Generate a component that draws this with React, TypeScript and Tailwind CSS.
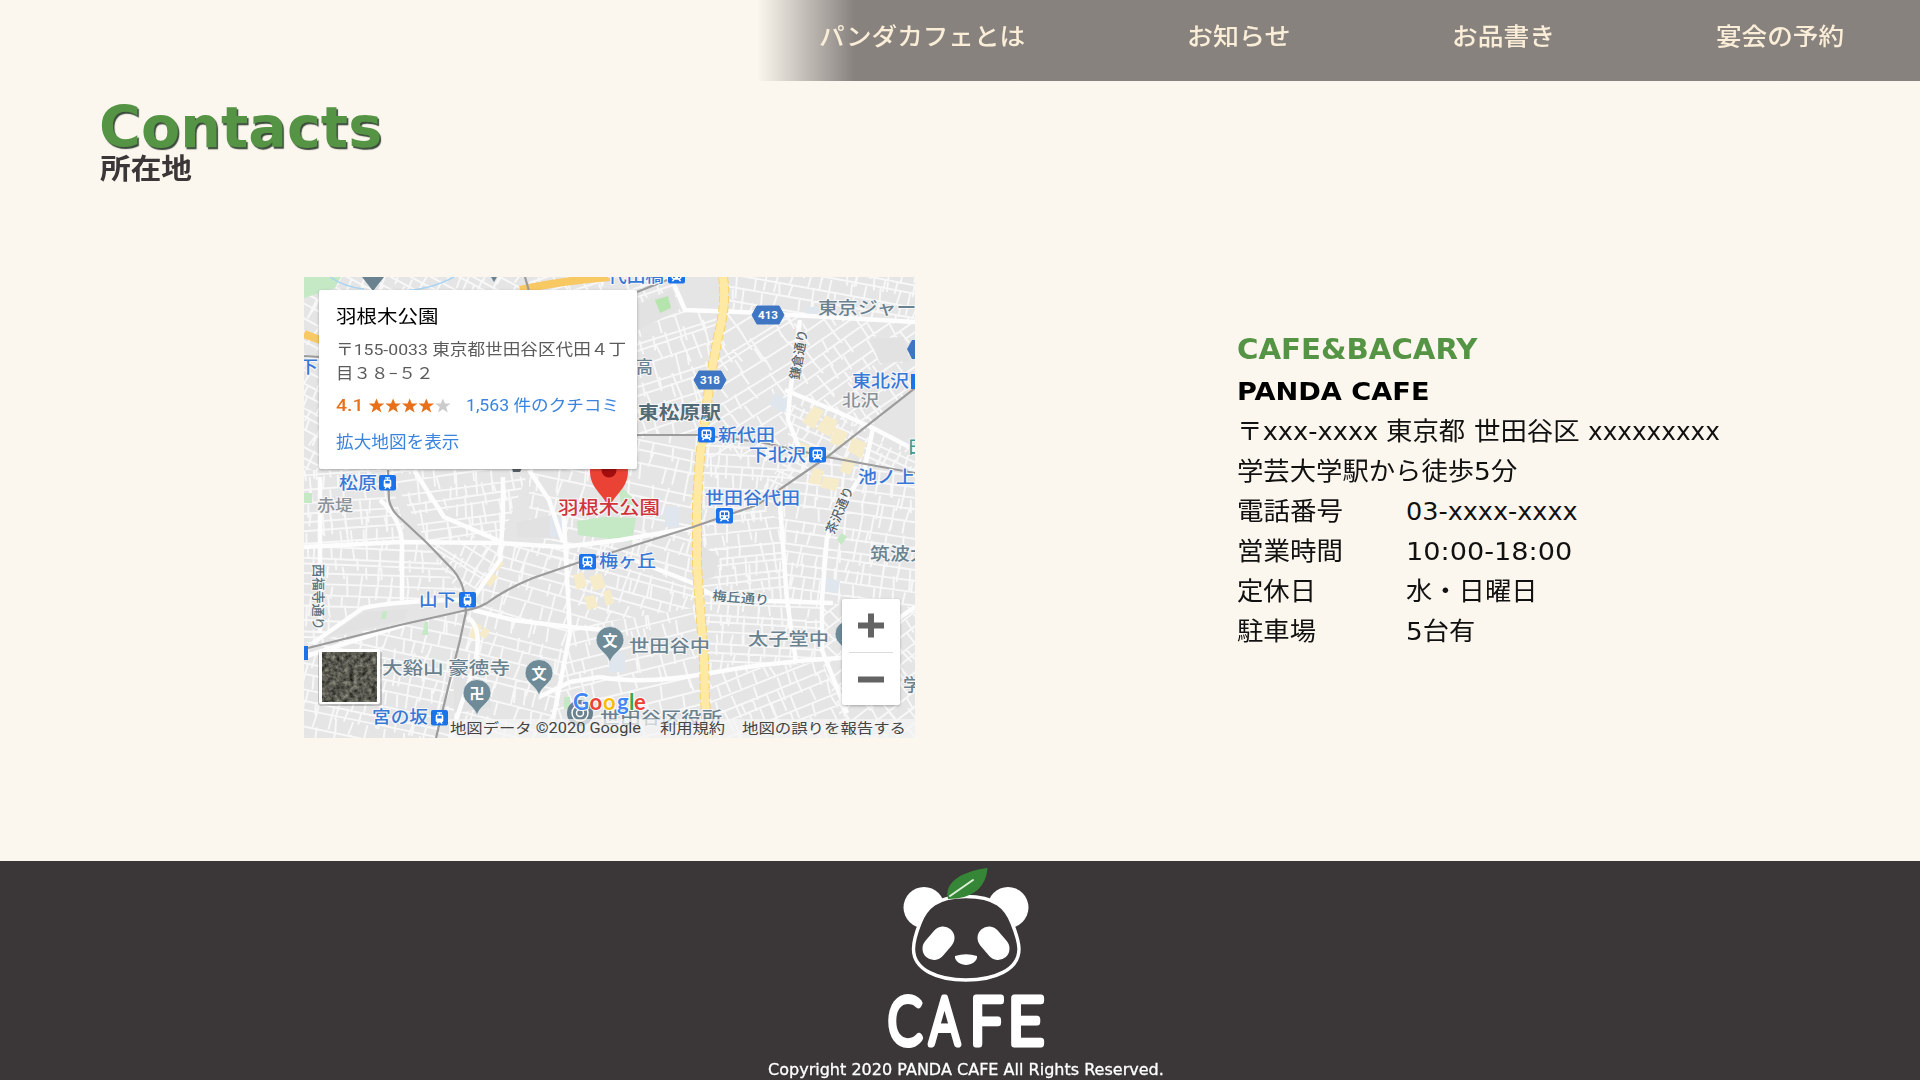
import { useLayoutEffect, useRef, type ReactNode } from "react";

const JP = "font-['Noto_Sans_CJK_JP',sans-serif]";
const LATIN = "font-['DejaVu_Sans','Noto_Sans_CJK_JP',sans-serif]";
const ROBOTO = "font-['Roboto','Noto_Sans_CJK_JP',sans-serif]";

/** One line of text, condensed or widened to an exact width. */
function Fit({ w, className = "", children }: { w: number; className?: string; children: ReactNode }) {
  const ref = useRef<HTMLSpanElement>(null);
  useLayoutEffect(() => {
    const el = ref.current;
    if (el) el.style.transform = `scaleX(${w / el.offsetWidth})`;
  }, [w]);
  return (
    <span className="block" style={{ width: w }}>
      <span ref={ref} className={`inline-block origin-left whitespace-pre ${className}`}>
        {children}
      </span>
    </span>
  );
}

function seeded(seed: number) {
  let s = seed;
  return () => {
    s = (s * 1664525 + 1013904223) % 4294967296;
    return s / 4294967296;
  };
}

/** Brick-like net of side streets around a centre, turned by an angle. */
function streets(seed: number, dx: number, dy: number, radius: number) {
  const rnd = seeded(seed);
  let d = "";
  for (let y = -radius; y < radius; y += dy * (0.7 + rnd() * 0.6)) {
    const bend = (rnd() - 0.5) * 10;
    d += `M${-radius} ${y.toFixed(1)}Q0 ${(y + bend).toFixed(1)} ${radius} ${(y + (rnd() - 0.5) * 8).toFixed(1)}`;
    for (let x = -radius; x < radius; x += dx * (0.6 + rnd() * 0.9)) {
      d += `M${x.toFixed(1)} ${y.toFixed(1)}l${((rnd() - 0.5) * 5).toFixed(1)} ${(dy * (rnd() > 0.7 ? 2 : 1.1)).toFixed(1)}`;
    }
  }
  return d;
}

const patches = [
  { p: "0,0 225,0 225,190 84,193 0,193", a: 28, dx: 16, dy: 11 },
  { p: "225,0 368,0 381,33 421,35 406,103 396,158 333,158 225,190", a: -18, dx: 18, dy: 13 },
  { p: "419,0 611,0 611,45 420,33", a: 10, dx: 16, dy: 11 },
  { p: "420,33 500,39 486,116 481,180 396,180 406,103", a: -32, dx: 22, dy: 14 },
  { p: "500,39 611,45 611,111 560,155 486,116", a: -35, dx: 20, dy: 14 },
  { p: "484,116 611,173 611,196 523,180 440,233 484,180", a: 24, dx: 13, dy: 10 },
  { p: "396,158 523,180 439,233 393,250", a: 3, dx: 17, dy: 11 },
  { p: "225,158 396,158 393,250 259,288 225,260", a: 12, dx: 20, dy: 14 },
  { p: "0,193 84,193 100,250 96,265 0,270", a: -4, dx: 15, dy: 12 },
  { p: "84,193 225,193 196,266 123,266", a: -8, dx: 17, dy: 11 },
  { p: "0,270 123,266 160,320 59,331 9,366 0,366", a: 2, dx: 20, dy: 11 },
  { p: "123,266 196,266 196,283 163,330", a: 32, dx: 13, dy: 9 },
  { p: "196,266 259,270 393,250 396,330 266,350 166,333", a: 16, dx: 16, dy: 12 },
  { p: "0,366 163,333 132,461 0,461", a: 12, dx: 16, dy: 12 },
  { p: "163,333 266,350 253,423 240,461 132,461", a: 14, dx: 15, dy: 13 },
  { p: "266,350 396,330 404,461 240,461", a: -14, dx: 20, dy: 14 },
  { p: "393,250 453,228 476,243 483,323 396,320", a: -6, dx: 14, dy: 10 },
  { p: "453,228 523,180 611,196 611,330 483,323 476,243", a: 8, dx: 15, dy: 12 },
  { p: "396,320 518,326 518,385 400,396", a: 3, dx: 14, dy: 10 },
  { p: "518,326 611,330 611,461 543,461 518,385", a: -38, dx: 18, dy: 13 },
  { p: "400,396 518,385 555,461 404,461", a: -22, dx: 17, dy: 12 },
];

const mainRoads = [
  "M368 3L381 33L436 35L611 45",
  "M481 113L529 133L569 151L611 173",
  "M496 43L486 116L484 143L496 173",
  "M523 260L518 323L518 373L543 436",
  "M296 400Q340 408 406 396T536 381L611 330",
  "M0 270L96 265L196 266L259 270L316 263L393 250",
  "M76 223Q96 240 98 265L98 323",
  "M9 366L59 331Q90 324 160 323",
  "M199 200L199 240L196 283L163 330",
  "M259 225L266 356L253 423L245 461",
  "M169 333L209 343L266 350L312 354",
  "M330 283L389 306Q410 322 429 323L529 326",
  "M476 228L483 323L492 385",
  "M16 200L16 356",
  "M0 380Q60 360 100 348",
  "M110 193L140 240L200 266",
  "M569 151L560 195L530 240L523 262",
  "M225 193L245 223L259 265",
  "M163 340Q180 350 170 390L146 461",
  "M296 400L266 405L235 420",
];

const rails = [
  "M333 158L396 158L456 165L523 180L611 196",
  "M611 111L523 180L453 228L389 250L306 276L273 286L229 301Q200 313 183 326Q172 332 163 333L96 348L4 371",
  "M84 193L85 223Q87 232 93 238L123 266L149 293Q157 302 160 315L162 335L156 363L146 403L138 436L132 461",
  "M221 0L225 14",
  "M333 15L363 3",
  "M0 79L16 80",
];

type LabelProps = { t: string; x: number; y: number; w: number; s?: number; c?: string; b?: boolean; rot?: number };
function Label({ t, x, y, w, s = 17, c = "#3a78d6", b, rot }: LabelProps) {
  return (
    <text
      x={x}
      y={y}
      textLength={w}
      lengthAdjust="spacingAndGlyphs"
      fontSize={s}
      fontWeight={b ? 700 : 500}
      fill={c}
      stroke="#f6f6f6"
      strokeWidth="2"
      paintOrder="stroke"
      transform={rot ? `rotate(${rot} ${x} ${y})` : undefined}
    >
      {t}
    </text>
  );
}

function Station({ x, y, tram }: { x: number; y: number; tram?: boolean }) {
  return (
    <g transform={`translate(${x} ${y})`}>
      <rect width="17" height="15.5" rx="2" fill="#1a73e8" />
      {tram ? (
        <g fill="#fff">
          <path d="M6 2.2h5v1.2H9v1h2.4l.9 1.4v5.4l-1.5 1.2 1 1.4h-1.6l-.9-1.2H7.700l-.9 1.200H5.200l1-1.400-1.500-1.200V5.800l.9-1.400H8v-1H6z" />
          <path d="M6.300 5.900h4.400v2.600H6.300z" fill="#1a73e8" />
        </g>
      ) : (
        <g fill="#fff">
          <path d="M5 2.500h7l1.500 1.500v6L12 11.300l1.300 2h-1.800l-1-1.500h-4l-1 1.500H3.700l1.300-2L3.500 10V4z" />
          <path d="M5 4.300h7v2.900H5z" fill="#1a73e8" />
          <circle cx="6" cy="9.300" r="1" fill="#1a73e8" />
          <circle cx="11" cy="9.300" r="1" fill="#1a73e8" />
          <path d="M8 4h1v3.400H8z" />
        </g>
      )}
    </g>
  );
}

function Pin({ x, y, t }: { x: number; y: number; t: string }) {
  return (
    <g transform={`translate(${x} ${y})`}>
      <path d="M0 22C-2 12-14 9-14-1A14 13.500 0 0 1 14-1C14 9 2 12 0 22Z" fill="#6f8b98" stroke="#e9eef0" strokeWidth=".8" />
      <text y="5" textAnchor="middle" fontSize="15" fontWeight="700" fill="#fff">
        {t}
      </text>
    </g>
  );
}

function RouteBadge({ x, y, t }: { x: number; y: number; t: string }) {
  return (
    <g transform={`translate(${x} ${y})`}>
      <path d="M-11-9H11L16 0L11 9H-11L-16 0Z" fill="#3f76c4" stroke="#3f76c4" strokeLinejoin="round" />
      <text y="4" textAnchor="middle" textLength="20" lengthAdjust="spacingAndGlyphs" fontSize="11" fontWeight="700" fill="#fff" fontFamily="Roboto, sans-serif">
        {t}
      </text>
    </g>
  );
}

function MapCanvas() {
  const slate = "#6a8290";
  return (
    <svg width="611" height="461" viewBox="0 0 611 461" className={`block ${JP}`}>
      <defs>
        {patches.map((k, i) => (
          <clipPath id={`patch${i}`} key={i}>
            <polygon points={k.p} />
          </clipPath>
        ))}
        <filter id="aerial" x="0" y="0" width="100%" height="100%" colorInterpolationFilters="sRGB">
          <feTurbulence type="fractalNoise" baseFrequency=".22" numOctaves="4" seed="4" />
          <feColorMatrix values=".6 .2 0 0 -.05  .6 .2 0 0 -.05  .55 .2 0 0 -.06  0 0 0 0 1" />
        </filter>
      </defs>
      <rect width="611" height="461" fill="#e5e5e6" />
      {patches.map((k, i) => {
        const pts = k.p.split(" ").map((q) => q.split(",").map(Number));
        const cx = pts.reduce((s, q) => s + q[0], 0) / pts.length;
        const cy = pts.reduce((s, q) => s + q[1], 0) / pts.length;
        return (
          <g key={i} clipPath={`url(#patch${i})`}>
            <path
              d={streets(i * 97 + 13, k.dx, k.dy, 190)}
              transform={`translate(${cx} ${cy}) rotate(${k.a})`}
              fill="none"
              stroke="#f8f8f9"
              strokeWidth="1.9"
            />
          </g>
        );
      })}
      <g fill="#e2e2e3">
        <path d="M333 28L368 12L376 32L333 54Z" />
        <path d="M212 245L250 238L257 262L214 260Z" />
        <path d="M20 360L62 335L104 332L100 343Z" />
        <path d="M150 400L180 404L188 430L150 436Z" />
        <path d="M566 62L600 60L606 84L576 86Z" />
        <path d="M397 268L416 280L410 300L397 304Z" />
      </g>
      <g fill="#dfe6ed">
        <path d="M246 240h12v20h-12zM361 230h14v20h-14zM470 116l16 8-6 12-14-8zM520 300l16 4-2 12-14-2zM502 30h22v10h-22zM305 375h16v20h-16z" />
      </g>
      <g fill="#f7ecc9">
        <path d="M498 145l12-16 10 5-10 18zM512 152l10-14 12 6-8 16zM494 165l14 4-4 10-12-4zM530 150l14 6-6 14-12-4zM548 160l14 6-4 16-14-8zM510 190l10 4-4 14-12-2zM520 200l16 2-4 12-16-4zM540 180l12 4-6 14-10-4z" />
        <path d="M188 290l6-8 6 4-6 8zM180 304l8-8 6 4-8 10zM269 298l10-3 4 14-10 4zM285 300l12-4 5 14-12 4zM280 320l10-2 4 12-10 3zM299 315l7-3 4 14-8 3zM170 345l8 4-6 14-7-3zM180 350l6 4-5 8-6-4z" />
      </g>
      <g fill="#c5e8c5">
        <path d="M0 0H37L31 11L0 21Z" />
        <path d="M273 244L300 240L332 241L328 265L274 258Z" />
        <path d="M313 205L334 227L318 230Z" />
        <path d="M351 23L364 19L367 31L356 36Z" fill="#b5e5ac" />
        <path d="M78 335l5-1-1 8h-5zM121 345h3v13h-6zM533 262l5-6 5 4-6 8zM0 216h8v10H0zM260 420h6v12h-6z" />
      </g>
      <path d="M100 14Q128 12 150 0M26 0Q40 10 60 12" fill="none" stroke="#a9d4f2" strokeWidth="1.5" />
      <g fill="none" stroke="#fdfdfd" strokeWidth="4.500" strokeLinejoin="round">
        {mainRoads.map((d) => (
          <path key={d} d={d} />
        ))}
      </g>
      <g fill="none">
        <path d="M216 13Q255 4 306 0M0 57L16 63" stroke="#f8c963" strokeWidth="8" />
        <path d="M419 0Q423 26 414 60L406 103L401 143L396 180L393 226V290L396 330L400 383L401 423L404 461" stroke="#f9d36e" strokeWidth="10" strokeDasharray="7 2.500" />
        <path d="M419 0Q423 26 414 60L406 103L401 143L396 180L393 226V290L396 330L400 383L401 423L404 461" stroke="#ffe9a3" strokeWidth="8" />
      </g>
      <g fill="none" stroke="#9c9c9c" strokeWidth="2.200">
        {rails.map((d) => (
          <path key={d} d={d} />
        ))}
      </g>

      <path d="M58 0H80L69 14Z" fill={slate} />
      <path d="M187 0h6l-3 5z" fill={slate} />
      <Label t="代田橋" x={304} y={5} w={56} />
      <Station x={364} y={-9} />
      <Label t="下高" x={-5} y={96} w={38} />
      <Label t="高" x={332} y={96} w={17} c={slate} />
      <RouteBadge x={464} y={38} t="413" />
      <RouteBadge x={406} y={103} t="318" />
      <path d="M603 72L608 63H611V82H608Z" fill="#3f76c4" />
      <Label t="東京ジャーナル" x={514} y={37} w={138} c={slate} />
      <Label t="鎌倉通り" x={495} y={103} w={50} s={13} c="#5a6469" rot={-80} />
      <Label t="東北沢" x={548} y={110} w={57} />
      <path d="M607 97h4v15h-4z" fill="#1a73e8" />
      <Label t="北沢" x={538} y={129} w={37} s={16} c="#8b9298" />
      <Label t="東松原駅" x={334} y={142} w={83} s={18} c="#536b77" b />
      <Station x={394} y={150} />
      <Label t="新代田" x={414} y={164} w={57} />
      <Label t="下北沢" x={445} y={184} w={57} />
      <Station x={505} y={170} />
      <Label t="池ノ上" x={554} y={206} w={57} />
      <Label t="日" x={603} y={176} w={18} c="#3c9d94" />
      <Label t="世田谷代田" x={401} y={227} w={95} />
      <Station x={412} y={231} />
      <Label t="茶沢通り" x={530} y={258} w={50} s={13} c="#5a6469" rot={-67} />
      <Label t="松原" x={35} y={212} w={38} />
      <Station x={75} y={198} tram />
      <Label t="赤堤" x={13} y={234} w={36} s={16} c="#8b9298" />
      <path d="M208 191h10l-2 4h-7z" fill="#5a6469" />
      <Label t="筑波大附" x={566} y={283} w={80} c={slate} />
      <Label t="梅ヶ丘" x={295} y={290} w={57} />
      <Station x={275} y={277} />
      <Label t="梅丘通り" x={408} y={323} w={57} s={13} c="#5a7280" rot={5} />
      <Label t="西福寺通り" x={10} y={287} w={66} s={13} c="#5a7280" rot={90} />
      <Label t="山下" x={115} y={329} w={37} />
      <Station x={155} y={315} tram />
      <path d="M-3 369h7v14h-7z" fill="#1a73e8" />
      <Label t="太子堂中" x={444} y={368} w={81} c={slate} />
      <Pin x={545} y={358} t="文" />
      <Label t="学" x={599} y={414} w={18} c={slate} />
      <Label t="世田谷中" x={325} y={375} w={81} c={slate} />
      <Pin x={306} y={364} t="文" />
      <Label t="大谿山 豪徳寺" x={78} y={397} w={128} c={slate} />
      <Pin x={235} y={397} t="文" />
      <Pin x={173} y={417} t="卍" />
      <Label t="宮の坂" x={68} y={446} w={56} />
      <Station x={127} y={433} tram />
      <circle cx="276" cy="436" r="13" fill={slate} />
      <circle cx="276" cy="436" r="8" fill="none" stroke="#fff" strokeWidth="1.500" />
      <circle cx="276" cy="436" r="3.500" fill="none" stroke="#fff" strokeWidth="1.500" />
      <Label t="世田谷区役所" x={296} y={447} w={122} c={slate} />

      <path d="M305 234C303 218 286 214 286 194A19 19 0 0 1 324 194C324 214 307 218 305 234Z" fill="#ea4335" />
      <circle cx="305" cy="193" r="7.500" fill="#a50e0e" />
      <Label t="羽根木公園" x={254} y={237} w={102} s={18} c="#d0343c" />

      <rect x="145" y="442" width="466" height="19" fill="#f5f5f5" fillOpacity=".72" />
      <text y="433" fontSize="22" fontWeight="700" fontFamily="Lato, sans-serif" stroke="#fff" strokeWidth="2" paintOrder="stroke">
        <tspan x="269" fill="#4285f4">G</tspan>
        <tspan x="285.500" fill="#ea4335">o</tspan>
        <tspan x="299" fill="#fbbc05">o</tspan>
        <tspan x="313" fill="#4285f4">g</tspan>
        <tspan x="325" fill="#34a853">l</tspan>
        <tspan x="330" fill="#ea4335">e</tspan>
      </text>
      <g fontSize="14" fill="#444" fontFamily="Roboto, 'Noto Sans CJK JP', sans-serif">
        <text x="146" y="456" textLength="191" lengthAdjust="spacingAndGlyphs">地図データ ©2020 Google</text>
        <text x="356" y="456" textLength="65" lengthAdjust="spacingAndGlyphs">利用規約</text>
        <text x="438" y="456" textLength="164" lengthAdjust="spacingAndGlyphs">地図の誤りを報告する</text>
      </g>

      <rect x="14" y="374" width="64" height="55" rx="3" fill="#000" opacity=".2" />
      <rect x="15" y="372" width="61" height="55" rx="2" fill="#fff" />
      <rect x="18" y="375" width="55" height="50" filter="url(#aerial)" />
    </svg>
  );
}

function PlaceCard() {
  return (
    <div className={`absolute top-[13px] left-[15px] h-[179px] w-[318px] rounded-[2px] bg-white pt-[14px] pl-[17px] shadow-[0_1px_3px_rgba(0,0,0,0.3)] ${ROBOTO}`}>
      <div className="h-[27px] text-[18.5px] leading-[26px] text-black">
        <Fit w={103}>羽根木公園</Fit>
      </div>
      <div className="mt-[8px] text-[15.5px] leading-[23.5px] text-[#5b5b5b]">
        <Fit w={290}>〒155-0033 東京都世田谷区代田４丁</Fit>
        <Fit w={97}>目３８−５２</Fit>
      </div>
      <div className="mt-[6px] flex h-[28px] items-center text-[16.5px]">
        <Fit w={27} className="font-medium text-[#e7711b]">4.1</Fit>
        <svg width="82" height="16" viewBox="0 0 82 16" className="ml-[6px]">
          {[0, 1, 2, 3, 4].map((i) => (
            <path
              key={i}
              transform={`translate(${i * 16.6} 0)`}
              d="M7.500 .5L9.600 5.500H15.300L10.700 8.900L12.400 14.500L7.500 11.200L2.600 14.500L4.300 8.900L-.3 5.500H5.400Z"
              fill={i < 4 ? "#e7711b" : "#cccccc"}
            />
          ))}
        </svg>
        <div className="ml-[15px] text-[16px] text-[#3a84df]">
          <Fit w={153}>1,563 件のクチコミ</Fit>
        </div>
      </div>
      <div className="mt-[10px] text-[16.5px] leading-[26px] text-[#3a84df]">
        <Fit w={124}>拡大地図を表示</Fit>
      </div>
    </div>
  );
}

function ZoomControl() {
  return (
    <div className="absolute top-[322px] left-[538px] flex h-[106px] w-[58px] flex-col items-center rounded-[2px] bg-white shadow-[0_1px_3px_rgba(0,0,0,0.3)]">
      <svg width="58" height="53" viewBox="0 0 58 53">
        <path d="M16 26.500H42M29 14.500V38.500" stroke="#636363" strokeWidth="6" />
      </svg>
      <div className="h-px w-[44px] shrink-0 bg-[#dcdcdc]" />
      <svg width="58" height="52" viewBox="0 0 58 52">
        <path d="M16 26.500H42" stroke="#636363" strokeWidth="6" />
      </svg>
    </div>
  );
}

function Logo() {
  return (
    <svg width="180" height="190" viewBox="0 0 180 190" className="block">
      <g transform="translate(-16 -11)">
        <circle cx="64" cy="57.500" r="20.500" fill="#fff" />
        <circle cx="148" cy="57.500" r="20.500" fill="#fff" />
        <path
          d="M106 46.500C136 46.500 146 58 152 73C156 83 159 92 159 99C159 120 134 130 106 130C78 130 53.500 120 53.500 99C53.500 92 56 83 60 73C66 58 76 46.500 106 46.500Z"
          fill="#3b3637"
          stroke="#fff"
          strokeWidth="3.400"
        />
        <g stroke="#fff" strokeLinecap="round">
          <path d="M83 88L74 98.500" strokeWidth="23" />
          <path d="M129 88L138 98.500" strokeWidth="23" />
        </g>
        <path d="M95 106Q106 102.500 117 106C118 111 111 115 106 115C101 115 94 111 95 106Z" fill="#fff" />
        <path d="M88 49C84 34 98 22 127.500 18C126 38 112 49 88 49Z" fill="#368637" />
        <path d="M90 46L113 30" stroke="#dcefd8" strokeWidth="2" strokeLinecap="round" fill="none" />
      </g>
      <g
        fill="#fff"
        stroke="#fff"
        strokeWidth="7"
        strokeLinejoin="round"
        strokeLinecap="round"
        fontSize="66"
        fontWeight="300"
        fontFamily="Lato, sans-serif"
      >
        <text x="12" y="182.500" textLength="34" lengthAdjust="spacingAndGlyphs">C</text>
        <text x="53.500" y="182.500" textLength="30" lengthAdjust="spacingAndGlyphs">A</text>
        <text x="94" y="182.500" textLength="33" lengthAdjust="spacingAndGlyphs">F</text>
        <text x="132" y="182.500" textLength="36" lengthAdjust="spacingAndGlyphs">E</text>
      </g>
    </svg>
  );
}

const details = [
  { k: "電話番号", v: "03-xxxx-xxxx", w: 172 },
  { k: "営業時間", v: "10:00-18:00", w: 166 },
  { k: "定休日", v: "水・日曜日", w: 132 },
  { k: "駐車場", v: "5台有", w: 69 },
];

export default function App() {
  return (
    <div className={`flex h-[1080px] w-[1920px] flex-col overflow-hidden bg-[#fcf7ee] text-black ${LATIN}`}>
      <header className="flex h-[81px] justify-end">
        <nav className={`flex h-full w-[1163px] bg-linear-to-r from-[#87827e]/0 from-0% via-[#87827e] via-[8.4%] to-[#87827e] pt-[16px] pl-[62px] text-[24px] leading-[37px] font-medium text-[#fbeed8] ${JP}`}>
          <a className="w-[368px]"><Fit w={206}>パンダカフェとは</Fit></a>
          <a className="w-[265px]"><Fit w={104}>お知らせ</Fit></a>
          <a className="w-[264px]"><Fit w={103}>お品書き</Fit></a>
          <a><Fit w={128}>宴会の予約</Fit></a>
        </nav>
      </header>

      <main className="flex h-[780px] shrink-0 flex-col">
        <h1 className="pt-[12px] pl-[99px] text-[57px] leading-[68px] font-bold text-[#549444] [text-shadow:1.5px_1.5px_1px_#3b4a3c]">
          <Fit w={283}>Contacts</Fit>
        </h1>
        <h2 className={`-mt-[13px] pl-[100px] text-[28px] leading-[38px] font-bold text-[#3b3637] ${JP}`}>
          <Fit w={92}>所在地</Fit>
        </h2>
        <div className="flex pt-[91px] pl-[304px]">
          <div className="relative h-[461px] w-[611px] overflow-hidden">
            <MapCanvas />
            <PlaceCard />
            <ZoomControl />
          </div>
          <section className="mt-[53px] ml-[322px] text-[25.5px] leading-[40px] text-[#111]">
            <p className="h-[41px] text-[28.500px] font-bold text-[#549444]"><Fit w={241}>CAFE&amp;BACARY</Fit></p>
            <p className="h-[40px] font-bold text-black"><Fit w={193}>PANDA CAFE</Fit></p>
            <p className="flex h-[40px] items-baseline">
              <Fit w={149}>〒xxx-xxxx </Fit>
              <Fit w={88}>東京都 </Fit>
              <Fit w={114}>世田谷区 </Fit>
              <Fit w={132}>xxxxxxxxx</Fit>
            </p>
            <p className="h-[40px]"><Fit w={280}>学芸大学駅から徒歩5分</Fit></p>
            <dl>
              {details.map((r) => (
                <div key={r.k} className="flex h-[40px]">
                  <dt className="w-[169px]"><Fit w={r.k.length * 26.5}>{r.k}</Fit></dt>
                  <dd><Fit w={r.w}>{r.v}</Fit></dd>
                </div>
              ))}
            </dl>
          </section>
        </div>
      </main>

      <footer className="flex h-[219px] shrink-0 flex-col items-center bg-[#3b3637] pl-[12px]">
        <Logo />
        <p className="mt-[9px] text-[15.500px] leading-[20px] text-white [-webkit-text-stroke:0.3px_#fff]"><Fit w={396}>Copyright 2020 PANDA CAFE All Rights Reserved.</Fit></p>
      </footer>
    </div>
  );
}
